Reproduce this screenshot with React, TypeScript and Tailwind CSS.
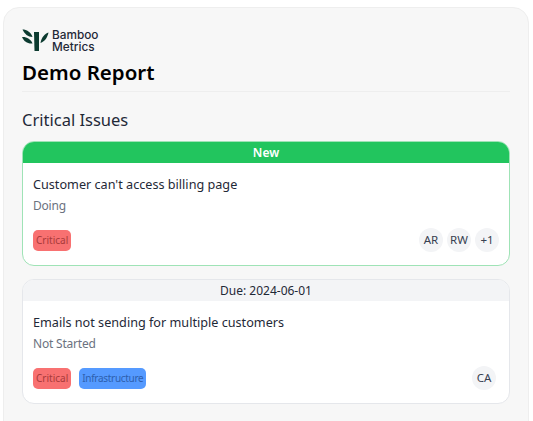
import React from 'react';

const FONT = "font-['Noto_Sans','Open_Sans',sans-serif]";

interface IssueCardProps {
    title: string;
    status: string;
    banner: string;
    isNew?: boolean;
    tags: { label: string; className: string }[];
    people: string[];
    peopleClass?: string;
}

function BambooLogo() {
    return (
        <svg width="27" height="23" viewBox="0 0 27 23" className="shrink-0">
            <path d="M12 3 H17 V22 H12.5 Z" fill="#0c3b30" />
            <path d="M0.5 0.5 C4.5 0.5 9 3 10.5 8 C6 8 2.5 5 0.5 0.5 Z" fill="#0c3b30" />
            <path d="M0 8 C4 7.5 9 10 10.5 14.5 C5.5 15 2 12.5 0 8 Z" fill="#0c3b30" />
            <path d="M26.5 3.5 C23 4.5 19.5 8 18.5 14 C23 12.5 25.5 8 26.5 3.5 Z" fill="#0c3b30" />
        </svg>
    );
}

function Avatar({ label }: { label: string }) {
    return (
        <div className="w-6 h-6 rounded-full bg-[#f3f4f6] flex items-center justify-center text-[11.5px] text-[#374151]">
            {label}
        </div>
    );
}

function IssueCard({ title, status, banner, isNew, tags, people, peopleClass }: IssueCardProps) {
    return (
        <div className={`h-[125px] rounded-[12px] border bg-white overflow-hidden ${isNew ? 'border-[#9fe3b6]' : 'border-[#e5e7eb]'}`}>
            <div className={`h-[21px] flex items-center justify-center text-[12px] leading-none ${isNew ? 'bg-[#22c55e] text-white font-semibold' : 'bg-[#f3f4f6] text-[#1f2937]'}`}>
                {banner}
            </div>
            <div className="px-[10px] pt-[11px]">
                <div className="text-[12.65px] leading-[20px] text-[#1f2937]">{title}</div>
                <div className="text-[12px] tracking-[-0.2px] leading-[20px] mt-[2px] text-[#6b7280]">{status}</div>
                <div className="flex items-center justify-between mt-[11px] h-[26px]">
                    <div className="flex gap-2">
                        {tags.map(tag => (
                            <span key={tag.label} className={`h-[21px] px-[3px] rounded-[5px] flex items-center text-[10px] ${tag.className}`}>
                                {tag.label}
                            </span>
                        ))}
                    </div>
                    <div className={`flex gap-[4px] ${peopleClass ?? ''}`}>
                        {people.map(p => <Avatar key={p} label={p} />)}
                    </div>
                </div>
            </div>
        </div>
    );
}

export default function App() {
    return (
        <div className={`h-[421px] overflow-hidden bg-white pl-[3px] pr-[4px] pt-[7px] ${FONT}`}>
            <div className="h-[430px] rounded-[16px] border border-[#eeeeee] bg-[#f7f7f7] px-[18px] pt-[21px]">
                <div className="flex items-center gap-[3px] h-[23px]">
                    <BambooLogo />
                    <div className="font-['Inter',sans-serif] text-[11.8px] leading-[12px] font-medium text-[#1f2937]">
                        <div>Bamboo</div>
                        <div>Metrics</div>
                    </div>
                </div>
                <h1 className="mt-[5px] pb-[4px] text-[20.5px] leading-[30px] font-semibold text-black border-b border-[#eeeeee]">Demo Report</h1>
                <h2 className="mt-[16px] mb-[9px] text-[16.5px] leading-[24px] text-[#1f2937]">Critical Issues</h2>
                <div className="flex flex-col gap-[13px]">
                    <IssueCard
                        isNew
                        banner="New"
                        title="Customer can't access billing page"
                        status="Doing"
                        tags={[{ label: 'Critical', className: 'bg-[#f87171] text-[#a83a3a]' }]}
                        people={['AR', 'RW', '+1']}
                    />
                    <IssueCard
                        banner="Due: 2024-06-01"
                        title="Emails not sending for multiple customers"
                        status="Not Started"
                        tags={[
                            { label: 'Critical', className: 'bg-[#f87171] text-[#a83a3a]' },
                            { label: 'Infrastructure', className: 'bg-[#559aff] text-[#2d5fae] tracking-[-0.3px]' },
                        ]}
                        people={['CA']}
                        peopleClass="mr-[3px]"
                    />
                </div>
            </div>
        </div>
    );
}
